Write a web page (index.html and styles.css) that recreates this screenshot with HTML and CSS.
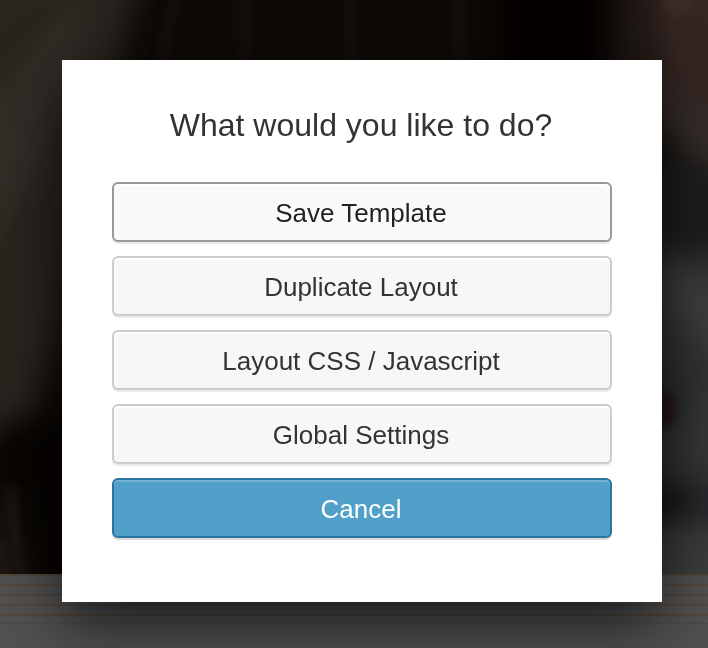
FILE: index.html
```html
<!DOCTYPE html>
<html lang="en">
<head>
<meta charset="utf-8">
<title>Layout actions</title>
<link rel="stylesheet" href="styles.css">
</head>
<body>
<svg class="backdrop" viewBox="0 0 708 648" aria-hidden="true">
  <defs>
    <filter id="soft" filterUnits="userSpaceOnUse" x="-60" y="-60" width="828" height="768" color-interpolation-filters="sRGB"><feGaussianBlur stdDeviation="14"/></filter>
    <filter id="fine" filterUnits="userSpaceOnUse" x="-60" y="-60" width="828" height="768" color-interpolation-filters="sRGB"><feGaussianBlur stdDeviation="4"/></filter>
    <clipPath id="photo"><rect width="708" height="574"/></clipPath>
  </defs>
  <g clip-path="url(#photo)">
    <rect width="708" height="574" fill="#0e0a06"/>
    <g filter="url(#soft)">
      <path d="M-50-50H150L125 30 110 120 85 200 60 340 25 430-50 450Z" fill="#2a241f"/>
      <path d="M-50 120L0 90 85-5 75 70 45 160-50 290Z" fill="#322d27"/>
      <path d="M0 420H100V620H0Z" fill="#070402"/>
      <path d="M-50 500L15 490 35 620H-50Z" fill="#17120e"/>
      <path d="M500-50H605V90H500Z" fill="#050101"/>
      <path d="M615-50H680V90H615Z" fill="#1f1814"/>
      <path d="M650-50H760V175L665 80Z" fill="#352623"/>
      <path d="M650 70L760 150V185L690 160 650 125Z" fill="#352d29"/>
      <path d="M640 190H760V630H640Z" fill="#303232"/>
      <path d="M630 150L760 170V255H630Z" fill="#1c1d1d"/>
      <path d="M660 255L760 310V390L665 310Z" fill="#3d3e3e"/>
      <path d="M640 355L700 400V425L640 390Z" fill="#282929"/>
      <path d="M640 485H685V518H640Z" fill="#14110e"/>
      <path d="M690 390H760V470H690Z" fill="#363838"/>
      <path d="M688 485H760V520H688Z" fill="#24272b"/>
      <path d="M640 530H760V630H640Z" fill="#3b3d3d"/>
    </g>
    <g filter="url(#fine)" fill="none">
      <path d="M5 115Q40 40 90 0M-5 250Q30 150 65 105" stroke="#38332c" stroke-width="5" opacity=".35"/>
      <path d="M12 485Q12 530 25 590M0 540L8 590" stroke="#28221d" stroke-width="5" opacity=".8"/>
      <path d="M180-20Q165 25 164 70M245-20V70M350-20V70M460-20V70" stroke="#1a120e" stroke-width="12" opacity=".6"/>
      <ellipse cx="663" cy="410" rx="13" ry="20" fill="#251616"/>
      <ellipse cx="678" cy="5" rx="16" ry="12" fill="#3e2e2c" opacity=".6"/>
    </g>
  </g>
  <rect y="574" width="708" height="74" fill="#515151"/>
  <g stroke="#544539" stroke-width="2" opacity=".8">
    <path d="M0 575H708M0 585H708M0 595H708M0 605H708M0 615H708"/>
    <path d="M0 623.5H708" stroke="#4b4844" stroke-width="1"/>
  </g>
  <path d="M0 647.5H708" stroke="#534b50"/>
</svg>
<main class="lightbox">
  <h1 class="title">What would you like to do?</h1>
  <div class="actions">
    <button class="button button-focus">Save Template</button>
    <button class="button">Duplicate Layout</button>
    <button class="button">Layout CSS / Javascript</button>
    <button class="button">Global Settings</button>
    <button class="button button-primary">Cancel</button>
  </div>
</main>
</body>
</html>
```
FILE: styles.css
```css
* { box-sizing: border-box; }

body {
  margin: 0;
  width: 708px;
  height: 648px;
  padding: 60px 46px 46px 62px;
  overflow: hidden;
  background: #0d0905;
  font-family: "Liberation Sans", Arial, sans-serif;
}

.backdrop {
  position: absolute;
  z-index: -1;
  top: 0;
  left: 0;
  width: 708px;
  height: 648px;
}

.lightbox {
  width: 600px;
  height: 542px;
  padding: 40px 50px 64px;
  background: #fff;
  box-shadow: 0 20px 60px rgba(0, 0, 0, .7);
}

.title {
  margin: 0 0 32px;
  padding-right: 2px;
  font-size: 32px;
  font-weight: 400;
  line-height: 50px;
  text-align: center;
  color: #333;
}

.actions {
  display: flex;
  flex-direction: column;
  gap: 14px;
}

.button {
  height: 60px;
  padding: 3px 2px 0 0;
  border: 2px solid #ccc;
  border-radius: 6px;
  background: #f7f7f7;
  box-shadow: inset 0 2px 0 #fff, 0 2px 0 rgba(0, 0, 0, .08);
  font-family: inherit;
  font-size: 26px;
  color: #333;
}

.button-focus {
  border-color: #999;
  background: #fafafa;
  color: #222;
}

.button-primary {
  border-color: #2e74a2;
  background: #50a0c9;
  box-shadow: inset 0 2px 0 #73b3d4, 0 2px 0 rgba(0, 0, 0, .15);
  color: #fff;
}
```
